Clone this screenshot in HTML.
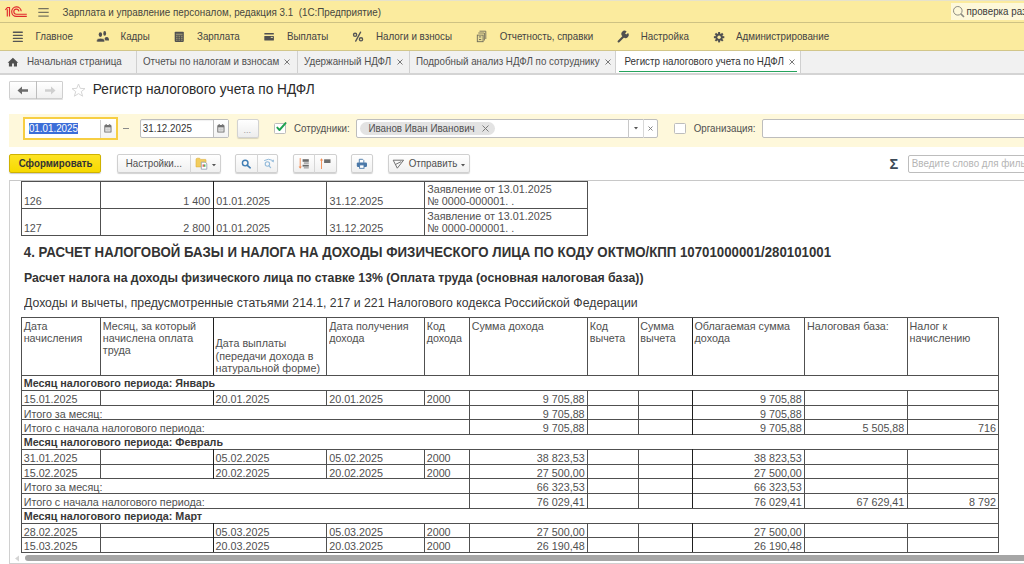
<!DOCTYPE html>
<html><head><meta charset="utf-8"><style>
html,body{margin:0;padding:0;}
body{width:1024px;height:564px;overflow:hidden;position:relative;background:#FFFFFF;font-family:"Liberation Sans", sans-serif;}
.t{position:absolute;white-space:nowrap;}
.b{position:absolute;}
</style></head><body>
<div class="b" style="left:0px;top:0px;width:1024px;height:23px;background:#FBEB9E;"></div>
<div class="b" style="left:0px;top:0px;width:1024px;height:1px;background:#E6E2CC;"></div>
<div class="b" style="left:0px;top:22px;width:1024px;height:1px;background:#CEC283;"></div>
<svg class="b" style="left:3px;top:4px" width="26" height="15" viewBox="3 4 26 15">
<g fill="none" stroke="#E0282C" stroke-width="1.15">
<path d="M5.4 9.8 L7.4 7.5 L9.5 7.5 L9.5 16.6"/>
<path d="M7.3 9.2 L7.3 16.6"/>
<path d="M21.2 11.3 A4.75 4.75 0 1 0 16.4 16.4 L26.8 16.4"/>
<path d="M18.9 11.3 A2.55 2.55 0 1 0 16.4 14.2 L26.8 14.2"/>
</g></svg>
<svg class="b" style="left:34px;top:4px" width="18" height="16" viewBox="34 4 18 16"><path d="M38.3 8.5 H48.7 M38.3 12.3 H48.7 M38.3 16 H48.7" stroke="#77745F" stroke-width="1.25"/></svg>
<div class="t" style="left:62.50px;top:8.07px;font-size:9.84px;line-height:9.84px;color:#474741;transform:scaleY(1.1);transform-origin:0 8.33px;">Зарплата и управление персоналом, редакция 3.1&nbsp; (1С:Предприятие)</div>
<div class="b" style="left:951px;top:3px;width:73px;height:17px;background:#FDF8DA;"></div>
<svg class="b" style="left:952px;top:5px" width="14" height="14" viewBox="0 0 14 14">
<circle cx="5.8" cy="5.8" r="4.3" fill="none" stroke="#8A8A80" stroke-width="1"/>
<path d="M8.9 8.9 L12 12" stroke="#8A8A80" stroke-width="1.6"/></svg>
<div class="t" style="left:966.40px;top:7.10px;font-size:9.8px;line-height:9.8px;color:#3A3A3A;transform:scaleY(1.1);transform-origin:0 8.30px;">проверка разн</div>
<div class="b" style="left:0px;top:23px;width:1024px;height:28px;background:#FBEB9E;"></div>
<div class="b" style="left:0px;top:50px;width:1024px;height:1px;background:#D2C68A;"></div>
<div class="t" style="left:35.50px;top:32.02px;font-size:9.78px;line-height:9.78px;color:#444444;transform:scaleY(1.1);transform-origin:0 8.28px;">Главное</div>
<div class="t" style="left:120.50px;top:32.02px;font-size:9.78px;line-height:9.78px;color:#444444;transform:scaleY(1.1);transform-origin:0 8.28px;">Кадры</div>
<div class="t" style="left:197.00px;top:32.02px;font-size:9.78px;line-height:9.78px;color:#444444;transform:scaleY(1.1);transform-origin:0 8.28px;">Зарплата</div>
<div class="t" style="left:287.00px;top:32.02px;font-size:9.78px;line-height:9.78px;color:#444444;transform:scaleY(1.1);transform-origin:0 8.28px;">Выплаты</div>
<div class="t" style="left:376.00px;top:32.02px;font-size:9.78px;line-height:9.78px;color:#444444;transform:scaleY(1.1);transform-origin:0 8.28px;">Налоги и взносы</div>
<div class="t" style="left:499.75px;top:32.02px;font-size:9.78px;line-height:9.78px;color:#444444;transform:scaleY(1.1);transform-origin:0 8.28px;">Отчетность, справки</div>
<div class="t" style="left:640.75px;top:32.02px;font-size:9.78px;line-height:9.78px;color:#444444;transform:scaleY(1.1);transform-origin:0 8.28px;">Настройка</div>
<div class="t" style="left:736.00px;top:32.02px;font-size:9.78px;line-height:9.78px;color:#444444;transform:scaleY(1.1);transform-origin:0 8.28px;">Администрирование</div>
<svg class="b" style="left:8px;top:26px" width="24" height="22" viewBox="8 26 24 22"><g stroke="#555" stroke-width="1.3" stroke-linecap="round"><path d="M13.4 32.25 H22.3 M13.4 35.35 H22.3 M13.4 38.4 H22.3 M13.4 41.45 H22.3"/></g></svg>
<svg class="b" style="left:94px;top:28px" width="18" height="16" viewBox="94 28 18 16">
<ellipse cx="104.7" cy="33.4" rx="1.4" ry="2.3" fill="#505050"/>
<path d="M104.6 38.2 Q105.4 36.9 106.9 36.9 Q109 37.1 109 40.4 L105.3 40.4 Z" fill="#505050"/>
<ellipse cx="100.4" cy="34.6" rx="1.7" ry="2.3" fill="#505050"/>
<path d="M96.8 41.9 L96.8 40.2 Q97 38.3 100.6 38.3 Q104.3 38.3 104.5 40.2 L104.5 41.9 Z" fill="#505050" stroke="#FBEB9E" stroke-width="0.5"/>
</svg>
<svg class="b" style="left:170px;top:28px" width="18" height="16" viewBox="170 28 18 16">
<rect x="174.7" y="31.7" width="9.1" height="10.2" rx="0.8" fill="#505050"/>
<g fill="#8F8A6E"><rect x="175.9" y="33.6" width="6.7" height="1.6"/>
<rect x="176" y="35.8" width="1.6" height="1.3"/><rect x="178.5" y="35.8" width="1.6" height="1.3"/><rect x="181" y="35.8" width="1.6" height="1.3"/>
<rect x="176" y="37.7" width="1.6" height="1.3"/><rect x="178.5" y="37.7" width="1.6" height="1.3"/><rect x="181" y="37.7" width="1.6" height="1.3"/>
<rect x="176" y="39.6" width="1.6" height="1.2"/><rect x="178.5" y="39.6" width="1.6" height="1.2"/><rect x="181" y="39.6" width="1.6" height="1.2"/></g>
</svg>
<svg class="b" style="left:260px;top:28px" width="18" height="16" viewBox="260 28 18 16">
<rect x="264.3" y="32.9" width="9.6" height="1.6" rx="0.5" fill="#505050"/>
<rect x="264.3" y="36" width="9.6" height="4.6" rx="0.6" fill="#505050"/>
<ellipse cx="271.8" cy="37.4" rx="1.2" ry="0.6" fill="#D8D0A0"/>
</svg>
<svg class="b" style="left:346px;top:26px" width="24" height="22" viewBox="346 26 24 22"><g fill="none" stroke="#555" stroke-width="1.35"><circle cx="355.1" cy="34.8" r="1.6"/><circle cx="361" cy="39.3" r="1.6"/><path d="M360.6 32.2 L355.7 41.1" stroke-linecap="round"/></g></svg>
<svg class="b" style="left:472px;top:28px" width="18" height="16" viewBox="472 28 18 16">
<g fill="none" stroke="#6E6B5A" stroke-width="0.9">
<path d="M479.5 31.2 L485.8 31.2 L485.8 39"/>
<path d="M478.3 33 L484.4 33 L484.4 40.5"/>
<rect x="477.3" y="35.1" width="5.8" height="6.6" fill="#E8DC98"/>
</g>
<rect x="479" y="36.5" width="2.2" height="0.9" fill="#6E6B5A"/><rect x="479" y="39" width="2.2" height="0.9" fill="#6E6B5A"/>
</svg>
<svg class="b" style="left:712.5px;top:31px" width="12" height="12" viewBox="0 0 12 12">
<g transform="translate(6.1 6.2)"><g fill="#505050">
<rect x="-1" y="-5.2" width="2" height="10.4"/><rect x="-1" y="-5.2" width="2" height="10.4" transform="rotate(45)"/>
<rect x="-1" y="-5.2" width="2" height="10.4" transform="rotate(90)"/><rect x="-1" y="-5.2" width="2" height="10.4" transform="rotate(135)"/>
<circle r="3.6"/></g><circle r="1.7" fill="#FBEB9E"/></g></svg>
<svg class="b" style="left:617px;top:30px" width="12" height="13" viewBox="0 0 12 13">
<path d="M1.6 11.4 L6.3 6.7" stroke="#505050" stroke-width="2.1" stroke-linecap="round"/>
<path d="M5.5 6.2 A3.1 3.1 0 0 1 9.6 1.5 L8.1 3.5 L9.2 4.6 L11.1 3.1 A3.1 3.1 0 0 1 6.6 7.3 Z" fill="#505050"/></svg>
<div class="b" style="left:0px;top:51px;width:1024px;height:23px;background:#F1F1F1;"></div>
<div class="b" style="left:0px;top:73px;width:1024px;height:1.5px;background:#D4D4D4;"></div>
<div class="b" style="left:615.3px;top:51px;width:185.70000000000005px;height:22.400000000000006px;background:#FFFFFF;border-left:1px solid #D0D0D0;border-right:1px solid #D0D0D0;box-sizing:border-box;"></div>
<div class="b" style="left:619.2px;top:71.1px;width:178.29999999999995px;height:1.3000000000000114px;background:#25A35C;"></div>
<div class="b" style="left:135.5px;top:51px;width:1.0px;height:22px;background:#D0D0D0;"></div>
<div class="b" style="left:296.5px;top:51px;width:1.0px;height:22px;background:#D0D0D0;"></div>
<div class="b" style="left:408.5px;top:51px;width:1.0px;height:22px;background:#D0D0D0;"></div>
<svg class="b" style="left:4px;top:54px" width="20" height="16" viewBox="4 54 20 16">
<path d="M12.9 57.8 L18.2 62.7 L17 62.7 L17 66.6 L13.9 66.6 L13.9 63.6 L12.1 63.6 L12.1 66.6 L8.9 66.6 L8.9 62.7 L7.6 62.7 Z" fill="#505050"/></svg>
<div class="t" style="left:27.00px;top:57.10px;font-size:9.8px;line-height:9.8px;color:#505050;transform:scaleY(1.1);transform-origin:0 8.30px;">Начальная страница</div>
<div class="t" style="left:143.00px;top:57.10px;font-size:9.8px;line-height:9.8px;color:#505050;transform:scaleY(1.1);transform-origin:0 8.30px;">Отчеты по налогам и взносам</div>
<div class="t" style="left:304.00px;top:57.10px;font-size:9.8px;line-height:9.8px;color:#505050;transform:scaleY(1.1);transform-origin:0 8.30px;">Удержанный НДФЛ</div>
<div class="t" style="left:416.00px;top:57.10px;font-size:9.8px;line-height:9.8px;color:#505050;transform:scaleY(1.1);transform-origin:0 8.30px;">Подробный анализ НДФЛ по сотруднику</div>
<div class="t" style="left:624.50px;top:57.10px;font-size:9.8px;line-height:9.8px;color:#333;transform:scaleY(1.1);transform-origin:0 8.30px;">Регистр налогового учета по НДФЛ</div>
<svg class="b" style="left:284.25px;top:59px" width="6" height="6" viewBox="0 0 6 6"><path d="M0.5 0.5 L5.5 5.5 M5.5 0.5 L0.5 5.5" stroke="#6A6A6A" stroke-width="0.9"/></svg>
<svg class="b" style="left:396.50px;top:59px" width="6" height="6" viewBox="0 0 6 6"><path d="M0.5 0.5 L5.5 5.5 M5.5 0.5 L0.5 5.5" stroke="#6A6A6A" stroke-width="0.9"/></svg>
<svg class="b" style="left:605.25px;top:59px" width="6" height="6" viewBox="0 0 6 6"><path d="M0.5 0.5 L5.5 5.5 M5.5 0.5 L0.5 5.5" stroke="#6A6A6A" stroke-width="0.9"/></svg>
<svg class="b" style="left:788.50px;top:59px" width="6" height="6" viewBox="0 0 6 6"><path d="M0.5 0.5 L5.5 5.5 M5.5 0.5 L0.5 5.5" stroke="#6A6A6A" stroke-width="0.9"/></svg>
<div class="b" style="left:9.3px;top:81.4px;width:53.7px;height:17.599999999999994px;background:linear-gradient(#FFFFFF,#F0F0F0);border:1px solid #CFCFCF;box-sizing:border-box;border-radius:1px;box-shadow:0 1px 0 #E0E0E0;"></div>
<div class="b" style="left:36.1px;top:81.4px;width:1.0px;height:17.299999999999997px;background:#BDBDBD;"></div>
<svg class="b" style="left:17px;top:85.5px" width="12" height="9" viewBox="0 0 12 9"><path d="M0.5 4.5 L5 0.5 L5 3.3 L11 3.3 L11 5.7 L5 5.7 L5 8.5 Z" fill="#6B6B6B"/></svg>
<svg class="b" style="left:43.5px;top:85.5px" width="12" height="9" viewBox="0 0 12 9"><path d="M11.5 4.5 L7 0.5 L7 3.3 L1 3.3 L1 5.7 L7 5.7 L7 8.5 Z" fill="#CFCFCF"/></svg>
<svg class="b" style="left:71px;top:82.5px" width="15" height="15" viewBox="0 0 15 15"><path d="M7.5 1 L9.3 5.4 L14 5.6 L10.3 8.6 L11.6 13.2 L7.5 10.6 L3.4 13.2 L4.7 8.6 L1 5.6 L5.7 5.4 Z" fill="none" stroke="#D6D6D6" stroke-width="1"/></svg>
<div class="t" style="left:92.80px;top:83.25px;font-size:13.65px;line-height:13.65px;color:#2A2A2A;transform:scaleY(1.1);transform-origin:0 11.55px;">Регистр налогового учета по НДФЛ</div>
<div class="b" style="left:8.6px;top:114.3px;width:1015.4px;height:33.2px;background:#FEF8DB;"></div>
<div class="b" style="left:23.2px;top:117.4px;width:94.8px;height:22.599999999999994px;background:#FFFFFF;border:2px solid #F7CE42;box-sizing:border-box;"></div>
<div class="b" style="left:28.9px;top:123.2px;width:48.800000000000004px;height:10.600000000000009px;background:#3B6DD8;"></div>
<div class="t" style="left:28.90px;top:123.90px;font-size:9.8px;line-height:9.8px;color:#FFFFFF;transform:scaleY(1.1);transform-origin:0 8.30px;">01.01.2025</div>
<div class="b" style="left:100px;top:119.7px;width:1px;height:17.89999999999999px;background:#D0D0D0;"></div>
<div class="b" style="left:101px;top:119.7px;width:14.5px;height:17.89999999999999px;background:linear-gradient(#FFFFFF,#F3F3F3);"></div>
<svg class="b" style="left:103.8px;top:123.6px" width="8" height="9" viewBox="0 0 8 9"><rect x="0.3" y="1" width="7.2" height="7.6" rx="0.9" fill="#707070"/><rect x="1.2" y="3.3" width="5.4" height="4.4" fill="#DCDCDC"/><path d="M3.9 3.3 V7.7 M1.2 5.5 H6.6" stroke="#C4C4C4" stroke-width="0.6"/><rect x="1.4" y="0" width="1.6" height="1.3" rx="0.6" fill="#8A8A8A"/><rect x="4.8" y="0" width="1.6" height="1.3" rx="0.6" fill="#8A8A8A"/></svg>
<div class="b" style="left:123.4px;top:128.3px;width:5.599999999999994px;height:1.0px;background:#8A8A8A;"></div>
<div class="b" style="left:139.7px;top:119.25px;width:89.05000000000001px;height:18.94999999999999px;background:#FFFFFF;border:1px solid #BDBDBD;border-radius:2px;box-sizing:border-box;box-shadow:inset 0 1px 1px rgba(0,0,0,0.06);"></div>
<div class="b" style="left:213.3px;top:119.25px;width:1.0px;height:18.94999999999999px;background:#BDBDBD;"></div>
<div class="b" style="left:214.3px;top:120.25px;width:13.449999999999989px;height:16.94999999999999px;background:linear-gradient(#FFFFFF,#F3F3F3);"></div>
<svg class="b" style="left:217.2px;top:123.6px" width="8" height="9" viewBox="0 0 8 9"><rect x="0.3" y="1" width="7.2" height="7.6" rx="0.9" fill="#707070"/><rect x="1.2" y="3.3" width="5.4" height="4.4" fill="#DCDCDC"/><path d="M3.9 3.3 V7.7 M1.2 5.5 H6.6" stroke="#C4C4C4" stroke-width="0.6"/><rect x="1.4" y="0" width="1.6" height="1.3" rx="0.6" fill="#8A8A8A"/><rect x="4.8" y="0" width="1.6" height="1.3" rx="0.6" fill="#8A8A8A"/></svg>
<div class="t" style="left:142.80px;top:123.90px;font-size:9.8px;line-height:9.8px;color:#333;transform:scaleY(1.1);transform-origin:0 8.30px;">31.12.2025</div>
<div class="b" style="left:237px;top:118.6px;width:22px;height:19.900000000000006px;background:linear-gradient(#FFFFFF,#EDEDED);border:1px solid #D2D2D2;border-radius:2px;box-sizing:border-box;box-shadow:0 1px 1px rgba(0,0,0,0.15);"></div>
<div class="t" style="left:243.50px;top:126.38px;font-size:9px;line-height:9px;color:#A0A0A0;transform:scaleY(1.1);transform-origin:0 7.62px;">...</div>
<div class="b" style="left:274.2px;top:123px;width:11.600000000000023px;height:11px;background:#FFFFFF;border:1px solid #BDBDBD;border-radius:1.5px;box-sizing:border-box;"></div>
<svg class="b" style="left:275px;top:119.5px" width="12" height="12" viewBox="0 0 12 12"><path d="M2.3 7.6 L4.5 10 L10.6 3.1" fill="none" stroke="#1DA14F" stroke-width="1.9" stroke-linecap="round" stroke-linejoin="round"/></svg>
<div class="t" style="left:293.90px;top:123.70px;font-size:9.8px;line-height:9.8px;color:#505050;transform:scaleY(1.1);transform-origin:0 8.30px;">Сотрудники:</div>
<div class="b" style="left:356.2px;top:119.2px;width:302.3px;height:18.999999999999986px;background:#FFFFFF;border:1px solid #BDBDBD;border-radius:2px;box-sizing:border-box;"></div>
<div class="b" style="left:360.2px;top:121.6px;width:135.2px;height:13.400000000000006px;background:#E3E3E3;border-radius:7px;"></div>
<div class="t" style="left:368.40px;top:123.70px;font-size:9.8px;line-height:9.8px;color:#505050;transform:scaleY(1.1);transform-origin:0 8.30px;">Иванов Иван Иванович</div>
<svg class="b" style="left:482px;top:125px" width="7" height="7" viewBox="0 0 7 7"><path d="M0.5 0.5 L6.5 6.5 M6.5 0.5 L0.5 6.5" stroke="#7A7A7A" stroke-width="1"/></svg>
<div class="b" style="left:627.7px;top:119.2px;width:1.0px;height:18.999999999999986px;background:#C8C8C8;"></div>
<div class="b" style="left:643.4px;top:119.2px;width:1.0px;height:18.999999999999986px;background:#D8D8D8;"></div>
<svg class="b" style="left:633.5px;top:127px" width="4" height="3" viewBox="0 0 4 3"><path d="M0 0 L4 0 L2 2.5 Z" fill="#555"/></svg>
<svg class="b" style="left:648px;top:126px" width="5" height="5" viewBox="0 0 5 5"><path d="M0.5 0.5 L4.5 4.5 M4.5 0.5 L0.5 4.5" stroke="#777" stroke-width="0.9"/></svg>
<div class="b" style="left:674.2px;top:123px;width:11.399999999999977px;height:11px;background:#FFFFFF;border:1px solid #BDBDBD;border-radius:1.5px;box-sizing:border-box;"></div>
<div class="t" style="left:693.70px;top:123.70px;font-size:9.8px;line-height:9.8px;color:#505050;transform:scaleY(1.1);transform-origin:0 8.30px;">Организация:</div>
<div class="b" style="left:762.2px;top:119.2px;width:267.79999999999995px;height:18.999999999999986px;background:#FFFFFF;border:1px solid #BDBDBD;border-radius:2px;box-sizing:border-box;"></div>
<div class="b" style="left:8.9px;top:154.1px;width:92.6px;height:18.900000000000006px;background:linear-gradient(#FDE325,#F7D900);border:1px solid #CFB200;border-radius:2px;box-sizing:border-box;box-shadow:0 1px 1px rgba(0,0,0,0.2);"></div>
<div class="t" style="left:18.75px;top:159.29px;font-size:9.7px;line-height:9.7px;color:#333;font-weight:bold;transform:scaleY(1.1);transform-origin:0 8.21px;">Сформировать</div>
<div class="b" style="left:117.2px;top:154.1px;width:103.60000000000001px;height:18.900000000000006px;background:linear-gradient(#FFFFFF,#F0F0F0);border:1px solid #D0D0D0;border-radius:2px;box-sizing:border-box;box-shadow:0 1px 1px rgba(0,0,0,0.18);"></div>
<div class="b" style="left:190.3px;top:154.1px;width:1.0px;height:18.900000000000006px;background:#D6D6D6;"></div>
<div class="t" style="left:125.80px;top:159.20px;font-size:9.8px;line-height:9.8px;color:#505050;transform:scaleY(1.1);transform-origin:0 8.30px;">Настройки...</div>
<svg class="b" style="left:190px;top:152px" width="32" height="24" viewBox="190 152 32 24">
<path d="M196 159.6 Q196 158.2 197.4 158.2 L199.6 158.2 L200.6 159.4 L205.4 159.4 Q206 159.4 206 160 L206 166.9 L196 166.9 Z" fill="#F2CD5E" stroke="#DDAE3C" stroke-width="0.6"/>
<path d="M201.3 162.2 L205.2 162.2 L206.8 163.8 L206.8 169.2 L201.3 169.2 Z" fill="#FFFFFF" stroke="#8C9AAE" stroke-width="0.8"/>
<rect x="202.6" y="164.4" width="1.3" height="2.4" fill="#E05050"/><rect x="204.1" y="164.4" width="1.3" height="2.4" fill="#40B050"/>
<path d="M211.9 164.1 L216 164.1 L213.95 166.3 Z" fill="#555"/>
</svg>
<div class="b" style="left:235.2px;top:154.1px;width:43.10000000000002px;height:18.900000000000006px;background:linear-gradient(#FFFFFF,#F0F0F0);border:1px solid #D0D0D0;border-radius:2px;box-sizing:border-box;box-shadow:0 1px 1px rgba(0,0,0,0.18);"></div>
<div class="b" style="left:257.2px;top:154.1px;width:1.0px;height:18.900000000000006px;background:#D6D6D6;"></div>
<svg class="b" style="left:234px;top:152px" width="48" height="24" viewBox="234 152 48 24">
<circle cx="245.2" cy="163.1" r="2.8" fill="none" stroke="#3F7DB4" stroke-width="1.4"/>
<path d="M247.3 165.3 L250.2 167.8" stroke="#3F7DB4" stroke-width="1.6" stroke-linecap="round"/>
<circle cx="267.4" cy="164" r="2.2" fill="none" stroke="#93BADA" stroke-width="1.1"/>
<path d="M269 165.8 L270.6 167.6" stroke="#93BADA" stroke-width="1.2" stroke-linecap="round"/>
<path d="M264.2 160.6 Q268.5 158 272.6 160.4" fill="none" stroke="#93BADA" stroke-width="1"/>
<path d="M271.2 160.9 L274 159.6 L273.6 162.4 Z" fill="#93BADA"/>
</svg>
<div class="b" style="left:293.3px;top:154.1px;width:43.5px;height:18.900000000000006px;background:linear-gradient(#FFFFFF,#F0F0F0);border:1px solid #D0D0D0;border-radius:2px;box-sizing:border-box;box-shadow:0 1px 1px rgba(0,0,0,0.18);"></div>
<div class="b" style="left:314.4px;top:154.1px;width:1.0px;height:18.900000000000006px;background:#D6D6D6;"></div>
<svg class="b" style="left:290px;top:152px" width="50" height="24" viewBox="290 152 50 24">
<path d="M300.2 158.1 L300.2 167.5" stroke="#F08A50" stroke-width="0.9"/><path d="M298.6 166.6 L301.8 166.6 L300.2 168.8 Z" fill="#F08A50"/>
<rect x="302.6" y="159.2" width="6.2" height="2.6" fill="#6A6A6A"/><rect x="303.8" y="162.2" width="5" height="1.8" fill="#B0B0B0"/>
<rect x="302.6" y="164.8" width="6.2" height="1.8" fill="#6A6A6A"/><rect x="303.8" y="166.8" width="5" height="1.8" fill="#B0B0B0"/>
<path d="M321.5 169 L321.5 159.5" stroke="#F08A50" stroke-width="0.9"/><path d="M319.9 160.4 L323.1 160.4 L321.5 158.2 Z" fill="#F08A50"/>
<rect x="324.1" y="159.3" width="6.4" height="3.7" fill="#6F6F6F"/>
</svg>
<div class="b" style="left:350.7px;top:154.1px;width:22.100000000000023px;height:18.900000000000006px;background:linear-gradient(#FFFFFF,#F0F0F0);border:1px solid #D0D0D0;border-radius:2px;box-sizing:border-box;box-shadow:0 1px 1px rgba(0,0,0,0.18);"></div>
<svg class="b" style="left:348px;top:152px" width="64" height="24" viewBox="348 152 64 24">
<path d="M359.3 162.8 L359.3 159.3 L362.6 159.3 L363.8 160.5 L363.8 162.8" fill="#FFFFFF" stroke="#4A78A8" stroke-width="0.9"/>
<rect x="356.8" y="162.4" width="10.2" height="4.6" rx="1.2" fill="#4A78A8"/>
<rect x="359.6" y="164.9" width="4.4" height="3.4" fill="#FFFFFF" stroke="#4A78A8" stroke-width="0.9"/>
</svg>
<div class="b" style="left:388px;top:154.1px;width:82px;height:18.900000000000006px;background:linear-gradient(#FFFFFF,#F0F0F0);border:1px solid #D0D0D0;border-radius:2px;box-sizing:border-box;box-shadow:0 1px 1px rgba(0,0,0,0.18);"></div>
<svg class="b" style="left:388px;top:152px" width="24" height="24" viewBox="388 152 24 24">
<path d="M393.2 160.2 L403.6 160.2 L397.3 168.2 Z M395.6 164.4 L401.2 161.6" fill="none" stroke="#6A6A6A" stroke-width="0.95" stroke-linejoin="round"/>
</svg>
<div class="t" style="left:408.70px;top:159.20px;font-size:9.8px;line-height:9.8px;color:#505050;transform:scaleY(1.1);transform-origin:0 8.30px;">Отправить</div>
<svg class="b" style="left:461px;top:164px" width="4" height="3" viewBox="0 0 4 3"><path d="M0 0 L4 0 L2 2.5 Z" fill="#555"/></svg>
<div class="t" style="left:889.60px;top:156.93px;font-size:14.5px;line-height:14.5px;color:#3C4A57;font-weight:bold;">Σ</div>
<div class="b" style="left:908.3px;top:155.2px;width:121.70000000000005px;height:18.0px;background:#FFFFFF;border:1px solid #BDBDBD;border-radius:2px;box-sizing:border-box;"></div>
<div class="t" style="left:911.80px;top:158.50px;font-size:9.8px;line-height:9.8px;color:#B4B4B4;transform:scaleY(1.1);transform-origin:0 8.30px;">Введите слово для фильтра</div>
<div class="b" style="left:9px;top:180px;width:1021px;height:1px;background:#C8C8C8;"></div>
<div class="b" style="left:9px;top:180px;width:1px;height:384px;background:#D0D0D0;"></div>
<div class="b" style="left:9px;top:563px;width:1021px;height:1px;background:#D0D0D0;"></div>
<div class="b" style="left:20.90px;top:180.75px;width:567.10px;height:1px;background:#505050;"></div>
<div class="b" style="left:20.90px;top:207.80px;width:567.10px;height:1px;background:#505050;"></div>
<div class="b" style="left:20.90px;top:234.80px;width:567.10px;height:1px;background:#505050;"></div>
<div class="b" style="left:20.90px;top:180.75px;width:1px;height:55.05px;background:#505050;"></div>
<div class="b" style="left:100.00px;top:180.75px;width:1px;height:55.05px;background:#505050;"></div>
<div class="b" style="left:212.80px;top:180.75px;width:1px;height:55.05px;background:#1E1E1E;"></div>
<div class="b" style="left:326.40px;top:180.75px;width:1px;height:55.05px;background:#505050;"></div>
<div class="b" style="left:423.90px;top:180.75px;width:1px;height:55.05px;background:#505050;"></div>
<div class="b" style="left:587.00px;top:180.75px;width:1px;height:55.05px;background:#505050;"></div>
<div class="t" style="left:23.90px;top:195.60px;font-size:10.75px;line-height:10.75px;color:#505050;transform:scaleY(1.1);transform-origin:0 9.10px;">126</div>
<div class="t" style="right:813.80px;top:195.60px;font-size:10.75px;line-height:10.75px;color:#505050;text-align:right;transform:scaleY(1.1);transform-origin:0 9.10px;">1 400</div>
<div class="t" style="left:216.30px;top:195.60px;font-size:10.75px;line-height:10.75px;color:#505050;transform:scaleY(1.1);transform-origin:0 9.10px;">01.01.2025</div>
<div class="t" style="left:329.50px;top:195.60px;font-size:10.75px;line-height:10.75px;color:#505050;transform:scaleY(1.1);transform-origin:0 9.10px;">31.12.2025</div>
<div class="t" style="left:427.30px;top:183.50px;font-size:10.75px;line-height:10.75px;color:#505050;transform:scaleY(1.1);transform-origin:0 9.10px;">Заявление от 13.01.2025</div>
<div class="t" style="left:427.30px;top:196.20px;font-size:10.75px;line-height:10.75px;color:#505050;transform:scaleY(1.1);transform-origin:0 9.10px;">№ 0000-000001. .</div>
<div class="t" style="left:23.90px;top:222.60px;font-size:10.75px;line-height:10.75px;color:#505050;transform:scaleY(1.1);transform-origin:0 9.10px;">127</div>
<div class="t" style="right:813.80px;top:222.60px;font-size:10.75px;line-height:10.75px;color:#505050;text-align:right;transform:scaleY(1.1);transform-origin:0 9.10px;">2 800</div>
<div class="t" style="left:216.30px;top:222.60px;font-size:10.75px;line-height:10.75px;color:#505050;transform:scaleY(1.1);transform-origin:0 9.10px;">01.01.2025</div>
<div class="t" style="left:329.50px;top:222.60px;font-size:10.75px;line-height:10.75px;color:#505050;transform:scaleY(1.1);transform-origin:0 9.10px;">31.12.2025</div>
<div class="t" style="left:427.30px;top:210.55px;font-size:10.75px;line-height:10.75px;color:#505050;transform:scaleY(1.1);transform-origin:0 9.10px;">Заявление от 13.01.2025</div>
<div class="t" style="left:427.30px;top:223.25px;font-size:10.75px;line-height:10.75px;color:#505050;transform:scaleY(1.1);transform-origin:0 9.10px;">№ 0000-000001. .</div>
<div class="t" style="left:23.80px;top:245.78px;font-size:13.25px;line-height:13.25px;color:#333;font-weight:bold;transform:scaleY(1.1);transform-origin:0 11.22px;">4. РАСЧЕТ НАЛОГОВОЙ БАЗЫ И НАЛОГА НА ДОХОДЫ ФИЗИЧЕСКОГО ЛИЦА ПО КОДУ ОКТМО/КПП 10701000001/280101001</div>
<div class="t" style="left:24.00px;top:271.61px;font-size:12.27px;line-height:12.27px;color:#333;font-weight:bold;transform:scaleY(1.1);transform-origin:0 10.39px;">Расчет налога на доходы физического лица по ставке 13% (Оплата труда (основная налоговая база))</div>
<div class="t" style="left:24.00px;top:296.91px;font-size:12.27px;line-height:12.27px;color:#383838;transform:scaleY(1.1);transform-origin:0 10.39px;">Доходы и вычеты, предусмотренные статьями 214.1, 217 и 221 Налогового кодекса Российской Федерации</div>
<div class="b" style="left:20.90px;top:317.30px;width:978.35px;height:1px;background:#505050;"></div>
<div class="b" style="left:20.90px;top:375.00px;width:978.35px;height:1px;background:#505050;"></div>
<div class="b" style="left:20.90px;top:389.80px;width:978.35px;height:1px;background:#505050;"></div>
<div class="b" style="left:20.90px;top:404.50px;width:978.35px;height:1px;background:#505050;"></div>
<div class="b" style="left:20.90px;top:419.30px;width:978.35px;height:1px;background:#505050;"></div>
<div class="b" style="left:20.90px;top:434.10px;width:978.35px;height:1px;background:#505050;"></div>
<div class="b" style="left:20.90px;top:448.80px;width:978.35px;height:1px;background:#505050;"></div>
<div class="b" style="left:20.90px;top:463.50px;width:978.35px;height:1px;background:#505050;"></div>
<div class="b" style="left:20.90px;top:478.30px;width:978.35px;height:1px;background:#505050;"></div>
<div class="b" style="left:20.90px;top:493.10px;width:978.35px;height:1px;background:#505050;"></div>
<div class="b" style="left:20.90px;top:507.80px;width:978.35px;height:1px;background:#505050;"></div>
<div class="b" style="left:20.90px;top:522.60px;width:978.35px;height:1px;background:#505050;"></div>
<div class="b" style="left:20.90px;top:537.30px;width:978.35px;height:1px;background:#505050;"></div>
<div class="b" style="left:20.90px;top:552.00px;width:978.35px;height:1px;background:#505050;"></div>
<div class="b" style="left:20.90px;top:317.30px;width:1px;height:235.70px;background:#505050;"></div>
<div class="b" style="left:998.25px;top:317.30px;width:1px;height:235.70px;background:#505050;"></div>
<div class="b" style="left:100.00px;top:317.80px;width:1px;height:57.70px;background:#505050;"></div>
<div class="b" style="left:212.80px;top:317.80px;width:1px;height:57.70px;background:#1E1E1E;"></div>
<div class="b" style="left:326.40px;top:317.80px;width:1px;height:57.70px;background:#505050;"></div>
<div class="b" style="left:423.90px;top:317.80px;width:1px;height:57.70px;background:#505050;"></div>
<div class="b" style="left:468.90px;top:317.80px;width:1px;height:57.70px;background:#505050;"></div>
<div class="b" style="left:587.00px;top:317.80px;width:1px;height:57.70px;background:#505050;"></div>
<div class="b" style="left:637.50px;top:317.80px;width:1px;height:57.70px;background:#505050;"></div>
<div class="b" style="left:691.70px;top:317.80px;width:1px;height:57.70px;background:#1E1E1E;"></div>
<div class="b" style="left:804.20px;top:317.80px;width:1px;height:57.70px;background:#505050;"></div>
<div class="b" style="left:906.70px;top:317.80px;width:1px;height:57.70px;background:#505050;"></div>
<div class="t" style="left:23.70px;top:320.80px;font-size:10.75px;line-height:10.75px;color:#505050;transform:scaleY(1.1);transform-origin:0 9.10px;">Дата</div>
<div class="t" style="left:23.70px;top:333.10px;font-size:10.75px;line-height:10.75px;color:#505050;transform:scaleY(1.1);transform-origin:0 9.10px;">начисления</div>
<div class="t" style="left:102.80px;top:320.80px;font-size:10.75px;line-height:10.75px;color:#505050;transform:scaleY(1.1);transform-origin:0 9.10px;">Месяц, за который</div>
<div class="t" style="left:102.80px;top:333.10px;font-size:10.75px;line-height:10.75px;color:#505050;transform:scaleY(1.1);transform-origin:0 9.10px;">начислена оплата</div>
<div class="t" style="left:102.80px;top:345.40px;font-size:10.75px;line-height:10.75px;color:#505050;transform:scaleY(1.1);transform-origin:0 9.10px;">труда</div>
<div class="t" style="left:215.60px;top:337.80px;font-size:10.75px;line-height:10.75px;color:#505050;transform:scaleY(1.1);transform-origin:0 9.10px;">Дата выплаты</div>
<div class="t" style="left:215.60px;top:350.60px;font-size:10.75px;line-height:10.75px;color:#505050;transform:scaleY(1.1);transform-origin:0 9.10px;">(передачи дохода в</div>
<div class="t" style="left:215.60px;top:363.40px;font-size:10.75px;line-height:10.75px;color:#505050;transform:scaleY(1.1);transform-origin:0 9.10px;">натуральной форме)</div>
<div class="t" style="left:329.20px;top:320.80px;font-size:10.75px;line-height:10.75px;color:#505050;transform:scaleY(1.1);transform-origin:0 9.10px;">Дата получения</div>
<div class="t" style="left:329.20px;top:333.10px;font-size:10.75px;line-height:10.75px;color:#505050;transform:scaleY(1.1);transform-origin:0 9.10px;">дохода</div>
<div class="t" style="left:426.70px;top:320.80px;font-size:10.75px;line-height:10.75px;color:#505050;transform:scaleY(1.1);transform-origin:0 9.10px;">Код</div>
<div class="t" style="left:426.70px;top:333.10px;font-size:10.75px;line-height:10.75px;color:#505050;transform:scaleY(1.1);transform-origin:0 9.10px;">дохода</div>
<div class="t" style="left:471.70px;top:320.80px;font-size:10.75px;line-height:10.75px;color:#505050;transform:scaleY(1.1);transform-origin:0 9.10px;">Сумма дохода</div>
<div class="t" style="left:589.80px;top:320.80px;font-size:10.75px;line-height:10.75px;color:#505050;transform:scaleY(1.1);transform-origin:0 9.10px;">Код</div>
<div class="t" style="left:589.80px;top:333.10px;font-size:10.75px;line-height:10.75px;color:#505050;transform:scaleY(1.1);transform-origin:0 9.10px;">вычета</div>
<div class="t" style="left:640.30px;top:320.80px;font-size:10.75px;line-height:10.75px;color:#505050;transform:scaleY(1.1);transform-origin:0 9.10px;">Сумма</div>
<div class="t" style="left:640.30px;top:333.10px;font-size:10.75px;line-height:10.75px;color:#505050;transform:scaleY(1.1);transform-origin:0 9.10px;">вычета</div>
<div class="t" style="left:694.50px;top:320.80px;font-size:10.75px;line-height:10.75px;color:#505050;transform:scaleY(1.1);transform-origin:0 9.10px;">Облагаемая сумма</div>
<div class="t" style="left:694.50px;top:333.10px;font-size:10.75px;line-height:10.75px;color:#505050;transform:scaleY(1.1);transform-origin:0 9.10px;">дохода</div>
<div class="t" style="left:807.00px;top:320.80px;font-size:10.75px;line-height:10.75px;color:#505050;transform:scaleY(1.1);transform-origin:0 9.10px;">Налоговая база:</div>
<div class="t" style="left:909.50px;top:320.80px;font-size:10.75px;line-height:10.75px;color:#505050;transform:scaleY(1.1);transform-origin:0 9.10px;">Налог к</div>
<div class="t" style="left:909.50px;top:333.10px;font-size:10.75px;line-height:10.75px;color:#505050;transform:scaleY(1.1);transform-origin:0 9.10px;">начислению</div>
<div class="t" style="left:23.70px;top:378.30px;font-size:10.75px;line-height:10.75px;color:#383838;font-weight:bold;transform:scaleY(1.1);transform-origin:0 9.10px;">Месяц налогового периода: Январь</div>
<div class="b" style="left:100.00px;top:390.30px;width:1px;height:14.70px;background:#505050;"></div>
<div class="b" style="left:212.80px;top:390.30px;width:1px;height:14.70px;background:#1E1E1E;"></div>
<div class="b" style="left:326.40px;top:390.30px;width:1px;height:14.70px;background:#505050;"></div>
<div class="b" style="left:423.90px;top:390.30px;width:1px;height:14.70px;background:#505050;"></div>
<div class="b" style="left:468.90px;top:390.30px;width:1px;height:14.70px;background:#505050;"></div>
<div class="b" style="left:587.00px;top:390.30px;width:1px;height:14.70px;background:#505050;"></div>
<div class="b" style="left:637.50px;top:390.30px;width:1px;height:14.70px;background:#505050;"></div>
<div class="b" style="left:691.70px;top:390.30px;width:1px;height:14.70px;background:#1E1E1E;"></div>
<div class="b" style="left:804.20px;top:390.30px;width:1px;height:14.70px;background:#505050;"></div>
<div class="b" style="left:906.70px;top:390.30px;width:1px;height:14.70px;background:#505050;"></div>
<div class="t" style="left:23.70px;top:393.75px;font-size:10.75px;line-height:10.75px;color:#505050;transform:scaleY(1.1);transform-origin:0 9.10px;">15.01.2025</div>
<div class="t" style="left:215.60px;top:393.75px;font-size:10.75px;line-height:10.75px;color:#505050;transform:scaleY(1.1);transform-origin:0 9.10px;">20.01.2025</div>
<div class="t" style="left:329.20px;top:393.75px;font-size:10.75px;line-height:10.75px;color:#505050;transform:scaleY(1.1);transform-origin:0 9.10px;">20.01.2025</div>
<div class="t" style="left:426.70px;top:393.75px;font-size:10.75px;line-height:10.75px;color:#505050;transform:scaleY(1.1);transform-origin:0 9.10px;">2000</div>
<div class="t" style="right:439.40px;top:393.75px;font-size:10.75px;line-height:10.75px;color:#505050;text-align:right;transform:scaleY(1.1);transform-origin:0 9.10px;">9 705,88</div>
<div class="t" style="right:222.20px;top:393.75px;font-size:10.75px;line-height:10.75px;color:#505050;text-align:right;transform:scaleY(1.1);transform-origin:0 9.10px;">9 705,88</div>
<div class="b" style="left:468.90px;top:405.00px;width:1px;height:14.80px;background:#505050;"></div>
<div class="b" style="left:587.00px;top:405.00px;width:1px;height:14.80px;background:#505050;"></div>
<div class="b" style="left:637.50px;top:405.00px;width:1px;height:14.80px;background:#505050;"></div>
<div class="b" style="left:691.70px;top:405.00px;width:1px;height:14.80px;background:#1E1E1E;"></div>
<div class="b" style="left:804.20px;top:405.00px;width:1px;height:14.80px;background:#505050;"></div>
<div class="b" style="left:906.70px;top:405.00px;width:1px;height:14.80px;background:#505050;"></div>
<div class="t" style="left:23.70px;top:408.55px;font-size:10.75px;line-height:10.75px;color:#505050;transform:scaleY(1.1);transform-origin:0 9.10px;">Итого за месяц:</div>
<div class="t" style="right:439.40px;top:408.55px;font-size:10.75px;line-height:10.75px;color:#505050;text-align:right;transform:scaleY(1.1);transform-origin:0 9.10px;">9 705,88</div>
<div class="t" style="right:222.20px;top:408.55px;font-size:10.75px;line-height:10.75px;color:#505050;text-align:right;transform:scaleY(1.1);transform-origin:0 9.10px;">9 705,88</div>
<div class="b" style="left:468.90px;top:419.80px;width:1px;height:14.80px;background:#505050;"></div>
<div class="b" style="left:587.00px;top:419.80px;width:1px;height:14.80px;background:#505050;"></div>
<div class="b" style="left:637.50px;top:419.80px;width:1px;height:14.80px;background:#505050;"></div>
<div class="b" style="left:691.70px;top:419.80px;width:1px;height:14.80px;background:#1E1E1E;"></div>
<div class="b" style="left:804.20px;top:419.80px;width:1px;height:14.80px;background:#505050;"></div>
<div class="b" style="left:906.70px;top:419.80px;width:1px;height:14.80px;background:#505050;"></div>
<div class="t" style="left:23.70px;top:423.35px;font-size:10.75px;line-height:10.75px;color:#505050;transform:scaleY(1.1);transform-origin:0 9.10px;">Итого с начала налогового периода:</div>
<div class="t" style="right:439.40px;top:423.35px;font-size:10.75px;line-height:10.75px;color:#505050;text-align:right;transform:scaleY(1.1);transform-origin:0 9.10px;">9 705,88</div>
<div class="t" style="right:222.20px;top:423.35px;font-size:10.75px;line-height:10.75px;color:#505050;text-align:right;transform:scaleY(1.1);transform-origin:0 9.10px;">9 705,88</div>
<div class="t" style="right:119.70px;top:423.35px;font-size:10.75px;line-height:10.75px;color:#505050;text-align:right;transform:scaleY(1.1);transform-origin:0 9.10px;">5 505,88</div>
<div class="t" style="right:28.15px;top:423.35px;font-size:10.75px;line-height:10.75px;color:#505050;text-align:right;transform:scaleY(1.1);transform-origin:0 9.10px;">716</div>
<div class="t" style="left:23.70px;top:437.30px;font-size:10.75px;line-height:10.75px;color:#383838;font-weight:bold;transform:scaleY(1.1);transform-origin:0 9.10px;">Месяц налогового периода: Февраль</div>
<div class="b" style="left:100.00px;top:449.30px;width:1px;height:14.70px;background:#505050;"></div>
<div class="b" style="left:212.80px;top:449.30px;width:1px;height:14.70px;background:#1E1E1E;"></div>
<div class="b" style="left:326.40px;top:449.30px;width:1px;height:14.70px;background:#505050;"></div>
<div class="b" style="left:423.90px;top:449.30px;width:1px;height:14.70px;background:#505050;"></div>
<div class="b" style="left:468.90px;top:449.30px;width:1px;height:14.70px;background:#505050;"></div>
<div class="b" style="left:587.00px;top:449.30px;width:1px;height:14.70px;background:#505050;"></div>
<div class="b" style="left:637.50px;top:449.30px;width:1px;height:14.70px;background:#505050;"></div>
<div class="b" style="left:691.70px;top:449.30px;width:1px;height:14.70px;background:#1E1E1E;"></div>
<div class="b" style="left:804.20px;top:449.30px;width:1px;height:14.70px;background:#505050;"></div>
<div class="b" style="left:906.70px;top:449.30px;width:1px;height:14.70px;background:#505050;"></div>
<div class="t" style="left:23.70px;top:452.75px;font-size:10.75px;line-height:10.75px;color:#505050;transform:scaleY(1.1);transform-origin:0 9.10px;">31.01.2025</div>
<div class="t" style="left:215.60px;top:452.75px;font-size:10.75px;line-height:10.75px;color:#505050;transform:scaleY(1.1);transform-origin:0 9.10px;">05.02.2025</div>
<div class="t" style="left:329.20px;top:452.75px;font-size:10.75px;line-height:10.75px;color:#505050;transform:scaleY(1.1);transform-origin:0 9.10px;">05.02.2025</div>
<div class="t" style="left:426.70px;top:452.75px;font-size:10.75px;line-height:10.75px;color:#505050;transform:scaleY(1.1);transform-origin:0 9.10px;">2000</div>
<div class="t" style="right:439.40px;top:452.75px;font-size:10.75px;line-height:10.75px;color:#505050;text-align:right;transform:scaleY(1.1);transform-origin:0 9.10px;">38 823,53</div>
<div class="t" style="right:222.20px;top:452.75px;font-size:10.75px;line-height:10.75px;color:#505050;text-align:right;transform:scaleY(1.1);transform-origin:0 9.10px;">38 823,53</div>
<div class="b" style="left:100.00px;top:464.00px;width:1px;height:14.80px;background:#505050;"></div>
<div class="b" style="left:212.80px;top:464.00px;width:1px;height:14.80px;background:#1E1E1E;"></div>
<div class="b" style="left:326.40px;top:464.00px;width:1px;height:14.80px;background:#505050;"></div>
<div class="b" style="left:423.90px;top:464.00px;width:1px;height:14.80px;background:#505050;"></div>
<div class="b" style="left:468.90px;top:464.00px;width:1px;height:14.80px;background:#505050;"></div>
<div class="b" style="left:587.00px;top:464.00px;width:1px;height:14.80px;background:#505050;"></div>
<div class="b" style="left:637.50px;top:464.00px;width:1px;height:14.80px;background:#505050;"></div>
<div class="b" style="left:691.70px;top:464.00px;width:1px;height:14.80px;background:#1E1E1E;"></div>
<div class="b" style="left:804.20px;top:464.00px;width:1px;height:14.80px;background:#505050;"></div>
<div class="b" style="left:906.70px;top:464.00px;width:1px;height:14.80px;background:#505050;"></div>
<div class="t" style="left:23.70px;top:467.55px;font-size:10.75px;line-height:10.75px;color:#505050;transform:scaleY(1.1);transform-origin:0 9.10px;">15.02.2025</div>
<div class="t" style="left:215.60px;top:467.55px;font-size:10.75px;line-height:10.75px;color:#505050;transform:scaleY(1.1);transform-origin:0 9.10px;">20.02.2025</div>
<div class="t" style="left:329.20px;top:467.55px;font-size:10.75px;line-height:10.75px;color:#505050;transform:scaleY(1.1);transform-origin:0 9.10px;">20.02.2025</div>
<div class="t" style="left:426.70px;top:467.55px;font-size:10.75px;line-height:10.75px;color:#505050;transform:scaleY(1.1);transform-origin:0 9.10px;">2000</div>
<div class="t" style="right:439.40px;top:467.55px;font-size:10.75px;line-height:10.75px;color:#505050;text-align:right;transform:scaleY(1.1);transform-origin:0 9.10px;">27 500,00</div>
<div class="t" style="right:222.20px;top:467.55px;font-size:10.75px;line-height:10.75px;color:#505050;text-align:right;transform:scaleY(1.1);transform-origin:0 9.10px;">27 500,00</div>
<div class="b" style="left:468.90px;top:478.80px;width:1px;height:14.80px;background:#505050;"></div>
<div class="b" style="left:587.00px;top:478.80px;width:1px;height:14.80px;background:#505050;"></div>
<div class="b" style="left:637.50px;top:478.80px;width:1px;height:14.80px;background:#505050;"></div>
<div class="b" style="left:691.70px;top:478.80px;width:1px;height:14.80px;background:#1E1E1E;"></div>
<div class="b" style="left:804.20px;top:478.80px;width:1px;height:14.80px;background:#505050;"></div>
<div class="b" style="left:906.70px;top:478.80px;width:1px;height:14.80px;background:#505050;"></div>
<div class="t" style="left:23.70px;top:482.35px;font-size:10.75px;line-height:10.75px;color:#505050;transform:scaleY(1.1);transform-origin:0 9.10px;">Итого за месяц:</div>
<div class="t" style="right:439.40px;top:482.35px;font-size:10.75px;line-height:10.75px;color:#505050;text-align:right;transform:scaleY(1.1);transform-origin:0 9.10px;">66 323,53</div>
<div class="t" style="right:222.20px;top:482.35px;font-size:10.75px;line-height:10.75px;color:#505050;text-align:right;transform:scaleY(1.1);transform-origin:0 9.10px;">66 323,53</div>
<div class="b" style="left:468.90px;top:493.60px;width:1px;height:14.70px;background:#505050;"></div>
<div class="b" style="left:587.00px;top:493.60px;width:1px;height:14.70px;background:#505050;"></div>
<div class="b" style="left:637.50px;top:493.60px;width:1px;height:14.70px;background:#505050;"></div>
<div class="b" style="left:691.70px;top:493.60px;width:1px;height:14.70px;background:#1E1E1E;"></div>
<div class="b" style="left:804.20px;top:493.60px;width:1px;height:14.70px;background:#505050;"></div>
<div class="b" style="left:906.70px;top:493.60px;width:1px;height:14.70px;background:#505050;"></div>
<div class="t" style="left:23.70px;top:497.05px;font-size:10.75px;line-height:10.75px;color:#505050;transform:scaleY(1.1);transform-origin:0 9.10px;">Итого с начала налогового периода:</div>
<div class="t" style="right:439.40px;top:497.05px;font-size:10.75px;line-height:10.75px;color:#505050;text-align:right;transform:scaleY(1.1);transform-origin:0 9.10px;">76 029,41</div>
<div class="t" style="right:222.20px;top:497.05px;font-size:10.75px;line-height:10.75px;color:#505050;text-align:right;transform:scaleY(1.1);transform-origin:0 9.10px;">76 029,41</div>
<div class="t" style="right:119.70px;top:497.05px;font-size:10.75px;line-height:10.75px;color:#505050;text-align:right;transform:scaleY(1.1);transform-origin:0 9.10px;">67 629,41</div>
<div class="t" style="right:28.15px;top:497.05px;font-size:10.75px;line-height:10.75px;color:#505050;text-align:right;transform:scaleY(1.1);transform-origin:0 9.10px;">8 792</div>
<div class="t" style="left:23.70px;top:511.10px;font-size:10.75px;line-height:10.75px;color:#383838;font-weight:bold;transform:scaleY(1.1);transform-origin:0 9.10px;">Месяц налогового периода: Март</div>
<div class="b" style="left:100.00px;top:523.10px;width:1px;height:14.70px;background:#505050;"></div>
<div class="b" style="left:212.80px;top:523.10px;width:1px;height:14.70px;background:#1E1E1E;"></div>
<div class="b" style="left:326.40px;top:523.10px;width:1px;height:14.70px;background:#505050;"></div>
<div class="b" style="left:423.90px;top:523.10px;width:1px;height:14.70px;background:#505050;"></div>
<div class="b" style="left:468.90px;top:523.10px;width:1px;height:14.70px;background:#505050;"></div>
<div class="b" style="left:587.00px;top:523.10px;width:1px;height:14.70px;background:#505050;"></div>
<div class="b" style="left:637.50px;top:523.10px;width:1px;height:14.70px;background:#505050;"></div>
<div class="b" style="left:691.70px;top:523.10px;width:1px;height:14.70px;background:#1E1E1E;"></div>
<div class="b" style="left:804.20px;top:523.10px;width:1px;height:14.70px;background:#505050;"></div>
<div class="b" style="left:906.70px;top:523.10px;width:1px;height:14.70px;background:#505050;"></div>
<div class="t" style="left:23.70px;top:526.55px;font-size:10.75px;line-height:10.75px;color:#505050;transform:scaleY(1.1);transform-origin:0 9.10px;">28.02.2025</div>
<div class="t" style="left:215.60px;top:526.55px;font-size:10.75px;line-height:10.75px;color:#505050;transform:scaleY(1.1);transform-origin:0 9.10px;">05.03.2025</div>
<div class="t" style="left:329.20px;top:526.55px;font-size:10.75px;line-height:10.75px;color:#505050;transform:scaleY(1.1);transform-origin:0 9.10px;">05.03.2025</div>
<div class="t" style="left:426.70px;top:526.55px;font-size:10.75px;line-height:10.75px;color:#505050;transform:scaleY(1.1);transform-origin:0 9.10px;">2000</div>
<div class="t" style="right:439.40px;top:526.55px;font-size:10.75px;line-height:10.75px;color:#505050;text-align:right;transform:scaleY(1.1);transform-origin:0 9.10px;">27 500,00</div>
<div class="t" style="right:222.20px;top:526.55px;font-size:10.75px;line-height:10.75px;color:#505050;text-align:right;transform:scaleY(1.1);transform-origin:0 9.10px;">27 500,00</div>
<div class="b" style="left:100.00px;top:537.80px;width:1px;height:14.70px;background:#505050;"></div>
<div class="b" style="left:212.80px;top:537.80px;width:1px;height:14.70px;background:#1E1E1E;"></div>
<div class="b" style="left:326.40px;top:537.80px;width:1px;height:14.70px;background:#505050;"></div>
<div class="b" style="left:423.90px;top:537.80px;width:1px;height:14.70px;background:#505050;"></div>
<div class="b" style="left:468.90px;top:537.80px;width:1px;height:14.70px;background:#505050;"></div>
<div class="b" style="left:587.00px;top:537.80px;width:1px;height:14.70px;background:#505050;"></div>
<div class="b" style="left:637.50px;top:537.80px;width:1px;height:14.70px;background:#505050;"></div>
<div class="b" style="left:691.70px;top:537.80px;width:1px;height:14.70px;background:#1E1E1E;"></div>
<div class="b" style="left:804.20px;top:537.80px;width:1px;height:14.70px;background:#505050;"></div>
<div class="b" style="left:906.70px;top:537.80px;width:1px;height:14.70px;background:#505050;"></div>
<div class="t" style="left:23.70px;top:541.25px;font-size:10.75px;line-height:10.75px;color:#505050;transform:scaleY(1.1);transform-origin:0 9.10px;">15.03.2025</div>
<div class="t" style="left:215.60px;top:541.25px;font-size:10.75px;line-height:10.75px;color:#505050;transform:scaleY(1.1);transform-origin:0 9.10px;">20.03.2025</div>
<div class="t" style="left:329.20px;top:541.25px;font-size:10.75px;line-height:10.75px;color:#505050;transform:scaleY(1.1);transform-origin:0 9.10px;">20.03.2025</div>
<div class="t" style="left:426.70px;top:541.25px;font-size:10.75px;line-height:10.75px;color:#505050;transform:scaleY(1.1);transform-origin:0 9.10px;">2000</div>
<div class="t" style="right:439.40px;top:541.25px;font-size:10.75px;line-height:10.75px;color:#505050;text-align:right;transform:scaleY(1.1);transform-origin:0 9.10px;">26 190,48</div>
<div class="t" style="right:222.20px;top:541.25px;font-size:10.75px;line-height:10.75px;color:#505050;text-align:right;transform:scaleY(1.1);transform-origin:0 9.10px;">26 190,48</div>
<svg class="b" style="left:14px;top:555px" width="6" height="7" viewBox="0 0 6 7"><path d="M5 0.5 L1 3.5 L5 6.5 Z" fill="#D4D4D4"/></svg>
<div class="b" style="left:25px;top:555.3px;width:1015px;height:5.7000000000000455px;background:#A6A6A6;border-radius:3px;"></div>
</body></html>
